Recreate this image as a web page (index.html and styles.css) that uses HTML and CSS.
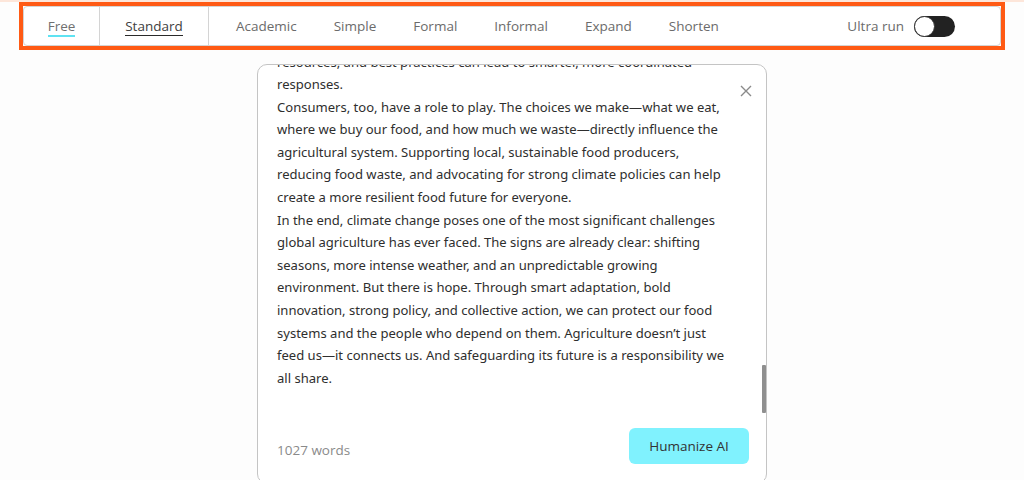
FILE: index.html
```html
<!DOCTYPE html>
<html lang="en">
<head>
<meta charset="utf-8">
<title>Humanize AI</title>
<link rel="stylesheet" href="styles.css">
</head>
<body>
<div class="topstrip"></div>
<div class="highlight">
  <nav class="modes">
    <div class="cell"><span class="mode free">Free</span></div>
    <div class="cell std"><span class="mode standard">Standard</span></div>
    <div class="styles">
      <span class="mode">Academic</span>
      <span class="mode">Simple</span>
      <span class="mode">Formal</span>
      <span class="mode">Informal</span>
      <span class="mode">Expand</span>
      <span class="mode">Shorten</span>
    </div>
    <div class="ultra">
      <span class="mode">Ultra run</span>
      <span class="toggle"><span class="knob"></span></span>
    </div>
  </nav>
</div>

<main class="editor">
  <button class="close" aria-label="Close">
    <svg width="12" height="12" viewBox="0 0 12 12"><path d="M1 1L11 11M11 1L1 11" stroke="#8a8a8a" stroke-width="1.4" fill="none"/></svg>
  </button>
  <div class="scroller">
    <div class="content">
      <p>resources, and best practices can lead to smarter, more coordinated responses.</p>
      <p>Consumers, too, have a role to play. The choices we make—what we eat, where we buy our food, and how much we waste—directly influence the agricultural system. Supporting local, sustainable food producers, reducing food waste, and advocating for strong climate policies can help create a more resilient food future for everyone.</p>
      <p>In the end, climate change poses one of the most significant challenges global agriculture has ever faced. The signs are already clear: shifting seasons, more intense weather, and an unpredictable growing environment. But there is hope. Through smart adaptation, bold innovation, strong policy, and collective action, we can protect our food systems and the people who depend on them. Agriculture doesn’t just feed us—it connects us. And safeguarding its future is a responsibility we all share.</p>
    </div>
    <span class="thumb"></span>
  </div>
  <footer class="foot">
    <span class="count">1027 words</span>
    <button class="humanize">Humanize AI</button>
  </footer>
</main>
</body>
</html>
```
FILE: styles.css
```css
* { box-sizing: border-box; }
html, body { margin: 0; padding: 0; }
body {
  background: #fdfdfd;
  font-family: "Open Sans", "Noto Sans", sans-serif;
  width: 1024px;
  height: 480px;
  overflow: hidden;
}
.topstrip {
  height: 2px;
  background: #fde6da;
}
.highlight {
  margin-left: 19px;
  width: 986px;
  height: 48px;
  border: 4px solid #ff5a14;
  background: #fff;
}
.modes {
  height: 40px;
  display: flex;
  align-items: stretch;
  border: 1px solid #d4d4d4;
  border-radius: 4px;
  background: #fff;
}
.mode {
  font-size: 13.5px;
  color: #6b6b6b;
  line-height: 20px;
}
.cell {
  display: flex;
  align-items: center;
  justify-content: center;
  width: 76px;
  border-right: 1px solid #d4d4d4;
}
.cell.std { width: 109px; }
.free {
  border-bottom: 2px solid #5fe3f2;
  line-height: 17px;
  padding-top: 2px;
  color: #707070;
}
.standard {
  border-bottom: 1.5px solid #2a2a2a;
  line-height: 17px;
  padding-top: 2px;
  color: #404040;
}
.styles {
  display: flex;
  align-items: center;
  gap: 37px;
  padding-left: 27px;
  flex: 1;
}
.ultra {
  display: flex;
  align-items: center;
  gap: 10px;
  padding-right: 45px;
}
.toggle {
  position: relative;
  width: 41px;
  height: 21px;
  border-radius: 11px;
  background: #222;
}
.knob {
  position: absolute;
  left: 0;
  top: 0;
  width: 21px;
  height: 21px;
  border-radius: 50%;
  background: #fff;
  border: 1.5px solid #333;
}
.editor {
  position: relative;
  width: 510px;
  height: 420px;
  margin: 14px auto 0;
  border: 1px solid #c4c4c4;
  border-radius: 10px;
  background: #fff;
  display: flex;
  flex-direction: column;
  overflow: hidden;
}
.close {
  position: absolute;
  top: 18px;
  right: 12px;
  width: 16px;
  height: 16px;
  padding: 0;
  border: 0;
  background: transparent;
  display: flex;
  align-items: center;
  justify-content: center;
  z-index: 2;
}
.scroller {
  position: relative;
  height: 350px;
  overflow: hidden;
  padding: 0 34px 0 19px;
}
.content {
  margin-top: -14.5px;
}
.content p {
  margin: 0;
  font-family: "Noto Sans", "Open Sans", sans-serif;
  font-size: 13.05px;
  line-height: 22.6px;
  color: #2e2e2e;
}
.thumb {
  position: absolute;
  right: 0;
  top: 300px;
  width: 4px;
  height: 48px;
  background: #8f8f8f;
  border-radius: 1px;
}
.foot {
  display: flex;
  align-items: center;
  justify-content: space-between;
  padding: 13px 17px 0 19px;
}
.count {
  font-size: 13.5px;
  color: #8a8a8a;
  padding-top: 8px;
}
.humanize {
  width: 120px;
  height: 36px;
  border: 0;
  border-radius: 6px;
  background: #80f2fe;
  font-family: "Open Sans", "Noto Sans", sans-serif;
  font-size: 13.5px;
  color: #333;
}
```
